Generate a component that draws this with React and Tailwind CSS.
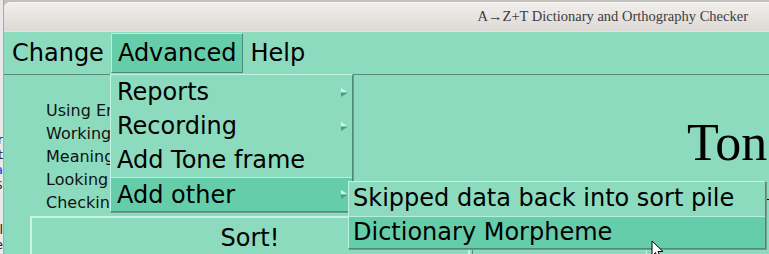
import React from "react";

const sans = { fontFamily: '"DejaVu Sans", sans-serif' };

const Arrow = () => (
  <svg width="7" height="9" viewBox="0 0 7 9" className="shrink-0">
    <polygon points="0,0 7,4.5 0,4.5" fill="#c9f7e8" />
    <polygon points="0,4.5 7,4.5 0,9" fill="#4f9985" />
  </svg>
);

const MenuItem = ({ label, sub, active }) => (
  <div
    className={
      "flex h-[34px] items-center justify-between pl-[6px] pr-[4px] leading-[34px] " +
      (active ? "bg-[#66cdaa] border-t border-t-[#b6eedb]" : "")
    }
  >
    <span>{label}</span>
    {sub && <Arrow />}
  </div>
);

const Cursor = () => (
  <svg width="13" height="20" viewBox="0 0 13 20" className="absolute left-[651px] top-[240px]">
    <path d="M1 1 L1 16 L4.5 12.5 L7 18.5 L9.5 17.5 L7 11.5 L12 11.5 Z" fill="#fff" stroke="#000" strokeWidth="1" strokeLinejoin="round" />
  </svg>
);

export default function App() {
  const leftBits = [
    { t: "r", c: "text-[#222]" },
    { t: "t", c: "text-[#222]" },
    { t: "a", c: "text-[#1a3fd6]" },
    { t: "$", c: "text-[#222]" },
    { t: "", c: "" },
    { t: "", c: "" },
    { t: "l", c: "text-[#222]" },
    { t: "e", c: "text-[#222]" },
  ];

  const status = [
    "Using English glosses",
    "Working on Nouns",
    "Meaning: gloss",
    "Looking at CVCV",
    "Checking tone",
  ];

  return (
    <div className="relative flex h-[254px] w-[769px] overflow-hidden bg-[#c4c1bd]" style={sans}>
      {/* window behind, left edge */}
      <div className="flex w-[4px] shrink-0 flex-col bg-[#e9e9e9] pt-[132px] border-r border-r-[#a9a9a9]">
        {leftBits.map((b, i) => (
          <div key={i} className="flex h-[15px] justify-end overflow-hidden">
            <span className={"whitespace-nowrap text-[13px] leading-[15px] " + b.c}>{b.t}</span>
          </div>
        ))}
      </div>

      {/* main window */}
      <div className="mt-[2px] flex min-w-0 flex-1 flex-col overflow-hidden">
        <div className="flex h-[29px] shrink-0 items-center justify-end rounded-tl-[6px] border-t border-t-[#f7f6f5] bg-gradient-to-b from-[#f1efed] to-[#dcd8d4] pr-[21px]">
          <span
            className="whitespace-nowrap text-[14.5px] text-[#3c3c3c]"
            style={{ fontFamily: '"Liberation Serif", serif' }}
          >
            A→Z+T Dictionary and Orthography Checker
          </span>
        </div>

        <div className="flex h-[43px] shrink-0 items-center border-t border-t-[#c2f2e2] bg-[#8cdbbf] pl-[1px] text-[24px] text-black">
          <div className="h-[40px] px-[7px] leading-[40px]">Change</div>
          <div className="h-[40px] border border-t-[#b6eedb] border-l-[#b6eedb] border-b-[#4f8a78] border-r-[#4f8a78] bg-[#66cdaa] px-[6px] leading-[38px]">
            Advanced
          </div>
          <div className="h-[40px] px-[7px] leading-[40px]">Help</div>
        </div>

        <div className="flex shrink-0 flex-col border-t border-t-[#5a8c7c] bg-[#8cdbbf] text-black">
          <div className="flex h-[136px]">
            <div className="w-[300px] shrink-0 pl-[42px] pt-[24px] text-[16px] leading-[23px] text-[#111]">
              {status.map((s) => (
                <div key={s} className="whitespace-nowrap">{s}</div>
              ))}
            </div>
            <div className="flex min-w-0 flex-1 flex-col pl-[383px] pt-[42px]">
              <div
                className="whitespace-nowrap text-[52px] leading-[52px]"
                style={{ fontFamily: '"Liberation Serif", serif' }}
              >
                Tone Frames
              </div>
              <div className="mt-[14px] -ml-[160px] whitespace-nowrap text-[16px] leading-[19px] underline">
                Sort syllable profiles individually
              </div>
            </div>
          </div>

          <div className="mt-[5px] flex pl-[26px]">
            <div className="flex h-[50px] w-[440px] shrink-0 justify-center border-2 border-[#c6f4e4] pt-[6px] text-[24px] leading-[28px]">
              Sort!
            </div>
            <div className="ml-[2px] h-[50px] w-[175px] shrink-0 border-l border-l-[#5a8c7c] border-r border-r-[#c6f4e4] pl-[4px] pt-[1px] text-[20px] leading-[24px]">
              (.V(.(.V...)
            </div>
          </div>
        </div>
      </div>

      {/* Advanced dropdown */}
      <div className="absolute left-[110px] top-[74px] w-[243px] border border-t-[#c2f2e2] border-l-[#c2f2e2] border-b-[#4f8a78] border-r-[#4f8a78] bg-[#8cdbbf] text-[24px] text-black shadow-[1px_1px_0_#6f9e8f]">
        <MenuItem label="Reports" sub />
        <MenuItem label="Recording" sub />
        <MenuItem label="Add Tone frame" />
        <MenuItem label="Add other" sub active />
      </div>

      {/* Add other submenu */}
      <div className="absolute left-[348px] top-[181px] w-[418px] border border-t-[#c2f2e2] border-l-[#c2f2e2] border-b-[#4f8a78] border-r-[#4f8a78] bg-[#8cdbbf] text-[24px] text-black shadow-[1px_1px_0_#6f9e8f]">
        <div className="h-[34px] pl-[4px] leading-[32px]">Skipped data back into sort pile</div>
        <div className="h-[32px] border-t border-t-[#b6eedb] bg-[#66cdaa] pl-[4px] leading-[30px]">Dictionary Morpheme</div>
      </div>

      <Cursor />
    </div>
  );
}
